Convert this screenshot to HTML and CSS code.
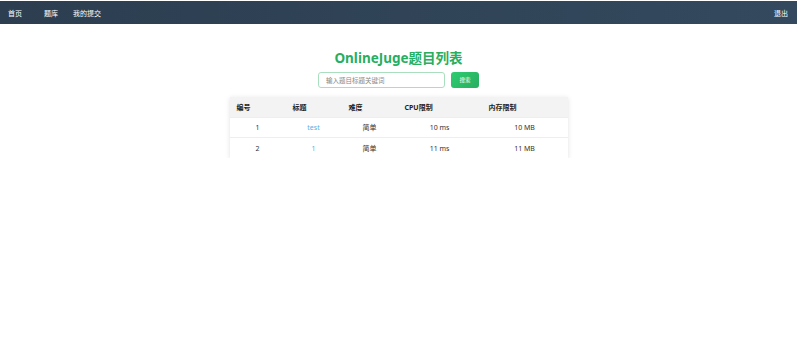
FILE: index.html
```html
<!DOCTYPE html>
<html lang="zh-CN">
<head>
    <meta charset="UTF-8">
    <meta name="viewport" content="width=device-width, initial-scale=1.0">
    <title>OnlineJuge题目列表</title>
    <link rel="stylesheet" href="styles.css">
</head>
<body>
    <nav class="navbar">
        <div class="nav-left">
            <a href="#" class="brand">首页</a>
            <a href="#">题库</a>
            <a href="#">我的提交</a>
        </div>
        <a href="#" class="logout">退出</a>
    </nav>

    <div class="container">
        <h1>OnlineJuge题目列表</h1>

        <form class="search-form">
            <input type="text" placeholder="输入题目标题关键词">
            <button type="submit">搜索</button>
        </form>

        <table class="problem-table">
            <thead>
                <tr>
                    <th class="col-id">编号</th>
                    <th class="col-title">标题</th>
                    <th class="col-level">难度</th>
                    <th class="col-cpu">CPU限制</th>
                    <th class="col-mem">内存限制</th>
                </tr>
            </thead>
            <tbody>
                <tr>
                    <td>1</td>
                    <td><a href="#">test</a></td>
                    <td>简单</td>
                    <td>10 ms</td>
                    <td>10 MB</td>
                </tr>
                <tr>
                    <td>2</td>
                    <td><a href="#">1</a></td>
                    <td>简单</td>
                    <td>11 ms</td>
                    <td>11 MB</td>
                </tr>
            </tbody>
        </table>
    </div>
</body>
</html>
```

FILE: styles.css
```css
* {
    box-sizing: border-box;
}
body {
    margin: 0;
    font-family: "Noto Sans", "Noto Sans CJK SC", sans-serif;
    color: #333;
    background: #fff;
}
a {
    text-decoration: none;
}
.navbar {
    display: flex;
    justify-content: space-between;
    align-items: center;
    height: 23px;
    margin-top: 1px;
    margin-right: 3px;
    padding: 0 9px 0 8px;
    background: linear-gradient(90deg, #2c3e50, #34495e);
}
.nav-left {
    display: flex;
    gap: 15px;
}
.nav-left .brand {
    margin-right: 7px;
}
.navbar a {
    color: #fff;
    font-size: 7px;
}
.container {
    display: flex;
    flex-direction: column;
    align-items: center;
    padding: 25px 3px 0 0;
}
h1 {
    margin: 0 0 5px;
    font-size: 13.5px;
    font-weight: 700;
    color: #27ae60;
    line-height: 18px;
}
.search-form {
    display: flex;
    gap: 6px;
    margin-bottom: 9px;
}
.search-form input {
    width: 127px;
    height: 16px;
    padding: 0 7px;
    border: 1px solid #a9dfbf;
    border-radius: 3px;
    font-family: inherit;
    font-size: 6.5px;
    outline: none;
}
.search-form input::placeholder {
    color: #888;
}
.search-form button {
    width: 28px;
    height: 16px;
    border: none;
    border-radius: 3px;
    background: linear-gradient(135deg, #2ecc71, #27ae60);
    color: #fff;
    font-family: inherit;
    font-size: 5.5px;
    cursor: pointer;
}
.problem-table {
    width: 338px;
    border-collapse: collapse;
    background: #fff;
    box-shadow: 0 1px 5px rgba(0,0,0,0.12);
    font-size: 7px;
}
.problem-table th {
    height: 20px;
    padding: 0 7px;
    background: #f3f3f3;
    text-align: left;
    font-weight: 700;
    color: #222;
}
.problem-table td {
    height: 20.5px;
    text-align: center;
    border-top: 1px solid #eee;
}
.problem-table td a {
    color: #5dade2;
}
.col-id, .col-title, .col-level {
    width: 56px;
}
.col-cpu {
    width: 84px;
}
.col-mem {
    width: 86px;
}
```
